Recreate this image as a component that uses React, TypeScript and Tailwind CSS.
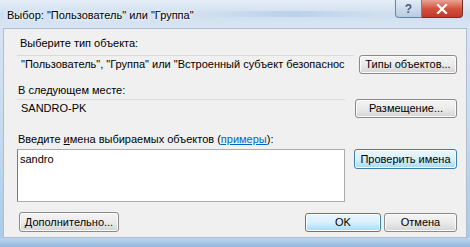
import React from "react";

const font = { fontFamily: '"Liberation Sans", Arial, sans-serif' };

function Btn({
  children,
  className = "",
  blue = false,
}: {
  children: React.ReactNode;
  className?: string;
  blue?: boolean;
}) {
  return (
    <div
      className={
        "flex items-center justify-center rounded-[3px] border text-[11px] leading-none text-black whitespace-nowrap " +
        (blue
          ? "border-[#3c7fb1] bg-gradient-to-b from-[#eaf6fd] via-[#d9f0fc] to-[#a7d9f5] shadow-[inset_0_0_0_1px_#ffffff]"
          : "border-[#8a8a8a] bg-gradient-to-b from-[#f4f4f4] via-[#ebebeb] to-[#d4d4d4] shadow-[inset_0_0_0_1px_#fbfbfb]") +
        " " +
        className
      }
    >
      {children}
    </div>
  );
}

export default function App() {
  return (
    <div
      className="w-[470px] h-[247px] overflow-hidden flex flex-col bg-gradient-to-b from-[#dbe7f4] via-[#c8dbef] to-[#a9c8ea]"
      style={font}
    >
      {/* Title bar */}
      <div className="h-[28px] flex items-start relative bg-gradient-to-b from-[#e4edf7] via-[#cfdff0] to-[#d8e5f3]">
        <div className="pl-[7px] pt-[8px] text-[11px] leading-[14px] text-black whitespace-nowrap [text-shadow:0_0_6px_#ffffff,0_0_3px_#ffffff]">
          Выбор: "Пользователь" или "Группа"
        </div>
        <div className="flex-1 mt-[11px] h-[6px] mx-[10px] bg-gradient-to-r from-transparent via-[#b3cbe4] to-transparent opacity-70" />
        <div className="flex mr-[7px] h-[18px]">
          <div className="w-[27px] h-[18px] rounded-bl-[4px] border border-t-0 border-[#6d85a5] bg-gradient-to-b from-[#e3ecf6] to-[#b6cbe2] flex items-center justify-center text-[12px] font-bold text-[#4a5d78] leading-none">
            ?
          </div>
          <div className="w-[41px] h-[18px] rounded-br-[4px] border border-t-0 border-l-0 border-[#7a2f25] bg-gradient-to-b from-[#e8a394] via-[#d2533e] to-[#c0392b] flex items-center justify-center">
            <svg width="12" height="10" viewBox="0 0 12 10">
              <path d="M2 1 L10 9 M10 1 L2 9" stroke="#ffffff" strokeWidth="2.2" strokeLinecap="square" />
            </svg>
          </div>
        </div>
      </div>

      {/* Client area */}
      <div className="mx-[3px] h-[210px] bg-[#f0f0f0] border border-[#aebdd0] flex flex-col pl-[13px] pr-[9px] pt-[7px] text-[11px] text-black">
        <div className="h-[14px] leading-[14px] pl-[3px]">Выберите тип объекта:</div>
        <div className="mt-[5px] flex h-[18px]">
          <div className="w-[337px] h-[18px] border-t border-[#d9d9d9] pl-[4px] leading-[17px] whitespace-nowrap overflow-hidden">
            "Пользователь", "Группа" или "Встроенный субъект безопаснос
          </div>
          <Btn className="ml-[5px] w-[98px] h-[19px]">Типы объектов...</Btn>
        </div>

        <div className="mt-[10px] h-[14px] leading-[14px] pl-[1px]">В следующем месте:</div>
        <div className="mt-[2px] flex h-[18px]">
          <div className="w-[328px] h-[18px] border-t border-[#dcdcdc] pl-[4px] leading-[17px]">SANDRO-PK</div>
          <Btn className="ml-[10px] w-[102px] h-[19px]">Размещение...</Btn>
        </div>

        <div className="mt-[15px] h-[14px] leading-[14px] pl-[1px]">
          Введите <span className="underline">и</span>мена выбираемых объектов (
          <span className="text-[#0066cc] underline">примеры</span>):
        </div>
        <div className="mt-[3px] flex">
          <div className="w-[328px] h-[53px] bg-white border border-[#abadb3] border-l-[#7a7a7a] pl-[2px] pt-[1px] leading-[16px]">
            sandro
          </div>
          <Btn blue className="ml-[9px] w-[103px] h-[20px]">
            Проверить имена
          </Btn>
        </div>

        <div className="mt-[10px] flex items-center">
          <Btn className="ml-[2px] w-[100px] h-[20px]">Дополнительно...</Btn>
          <div className="flex-1" />
          <Btn blue className="w-[76px] h-[19px] shadow-[inset_0_0_0_1px_#b9e4fb]">OK</Btn>
          <Btn className="ml-[3px] w-[73px] h-[19px]">Отмена</Btn>
        </div>
      </div>
      <div className="flex-1 bg-gradient-to-b from-[#bcd5ee] to-[#95b8df]" />
    </div>
  );
}
